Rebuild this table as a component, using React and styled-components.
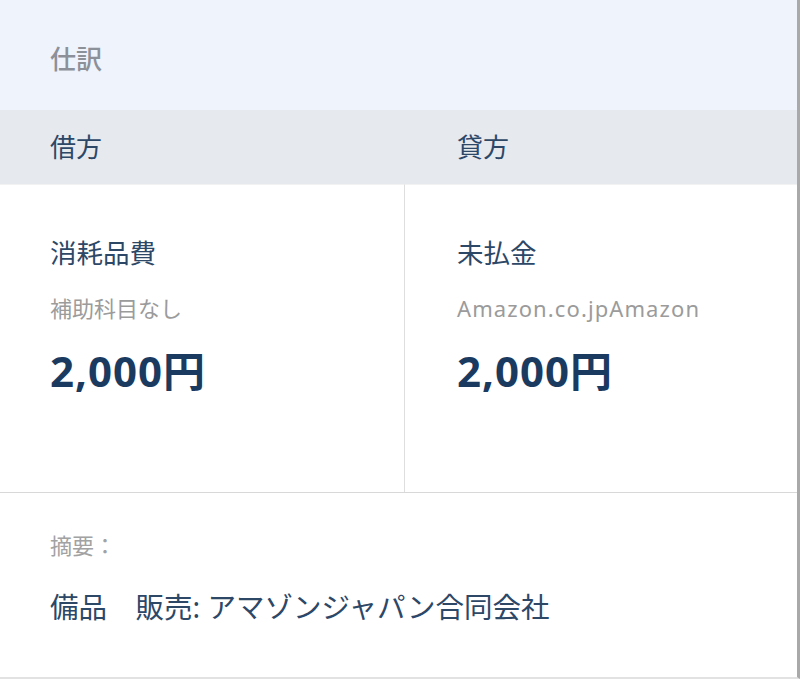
import React from "react";
import styled, { createGlobalStyle } from "styled-components";

const GlobalStyle = createGlobalStyle`
  html, body {
    margin: 0;
    padding: 0;
    background: #fff;
  }
  body {
    font-family: "Noto Sans", "Noto Sans CJK JP", sans-serif;
    -webkit-font-smoothing: antialiased;
  }
`;

const Card = styled.div`
  width: 797px;
  height: 677px;
  border-right: 3px solid #a9a9a9;
  border-bottom: 2px solid #e2e2e2;
  background: #fff;
  display: flex;
  flex-direction: column;
`;

const Title = styled.div`
  height: 110px;
  box-sizing: border-box;
  padding: 6px 50px 0;
  background: #eef3fc;
  display: flex;
  align-items: center;
  font-size: 26px;
  color: #8b9099;
  font-weight: 500;
`;

const Columns = styled.div`
  display: grid;
  grid-template-columns: 404px 1fr;
`;

const SideHead = styled.div`
  height: 74px;
  box-sizing: border-box;
  padding-bottom: 2px;
  background: #e6e9ee;
  display: flex;
  align-items: center;
  padding-left: ${(p) => (p.right ? "53px" : "50px")};
  font-size: 26px;
  color: #2d4767;
`;

const Side = styled.div`
  height: 308px;
  box-sizing: border-box;
  border-top: 1px solid #f2f2f2;
  border-left: ${(p) => (p.right ? "1px solid #dedede" : "none")};
  padding: 50px 0 0 ${(p) => (p.right ? "52px" : "50px")};
  display: flex;
  flex-direction: column;
`;

const Account = styled.div`
  font-size: 26.5px;
  line-height: 36px;
  color: #2d4767;
`;

const SubAccount = styled.div`
  margin-top: 23px;
  font-size: 22px;
  line-height: 28px;
  color: #9b9b9b;
  letter-spacing: ${(p) => (p.latin ? "1.1px" : "0")};
`;

const Amount = styled.div`
  margin-top: 21px;
  font-size: 42px;
  line-height: 56px;
  font-weight: 700;
  color: #1b3a60;
  letter-spacing: 1px;
`;

const Summary = styled.div`
  flex: 1;
  border-top: 1px solid #d8d8d8;
  padding: 38px 50px 0;
  display: flex;
  flex-direction: column;
`;

const SummaryLabel = styled.div`
  font-size: 22px;
  line-height: 28px;
  color: #a2a2a2;
`;

const SummaryText = styled.div`
  margin-top: 29px;
  font-size: 28.5px;
  line-height: 38px;
  color: #2d4767;
`;

const entries = [
  { head: "借方", account: "消耗品費", sub: "補助科目なし", amount: "2,000円" },
  {
    head: "貸方",
    account: "未払金",
    sub: "Amazon.co.jpAmazon",
    amount: "2,000円",
    right: true,
    latin: true,
  },
];

export default function App() {
  return (
    <>
      <GlobalStyle />
      <Card>
        <Title>仕訳</Title>
        <Columns>
          {entries.map((e) => (
            <SideHead key={e.head} right={e.right}>
              {e.head}
            </SideHead>
          ))}
          {entries.map((e) => (
            <Side key={e.account} right={e.right}>
              <Account>{e.account}</Account>
              <SubAccount latin={e.latin}>{e.sub}</SubAccount>
              <Amount>{e.amount}</Amount>
            </Side>
          ))}
        </Columns>
        <Summary>
          <SummaryLabel>摘要：</SummaryLabel>
          <SummaryText>備品　販売: アマゾンジャパン合同会社</SummaryText>
        </Summary>
      </Card>
    </>
  );
}
